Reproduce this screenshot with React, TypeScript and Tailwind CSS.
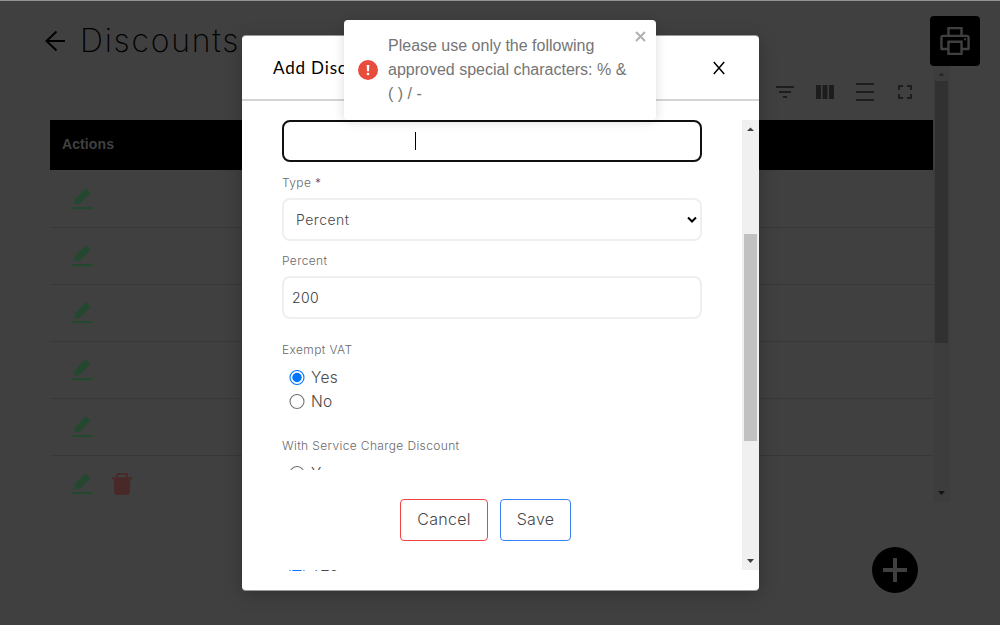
import React from "react";
import { AiOutlinePrinter } from "react-icons/ai";

const label =
  "font-['Inter'] font-light text-[12px] leading-4 tracking-[0.370px] text-[#6a6a6a] whitespace-nowrap";

function EditIcon() {
  return (
    <svg className="block h-6 w-6" viewBox="0 0 24 24" fill="#24482f">
      <path d="M4.3 17.2 4.8 12.2 15.8 1.1 20.7 6 9.3 17z" />
      <rect x="1" y="20" width="22" height="2.2" rx="1" />
    </svg>
  );
}

function TrashIcon() {
  return (
    <svg className="block h-6 w-6" viewBox="0 0 24 24" fill="#492828">
      <path d="M2 5.2h4V3.4Q6 1 8.300 1h7.400Q18 1 18 3.400v1.800h4v2h-1.700l-.6 13.300q-.2 2.300-2.400 2.300H6.700q-2.200 0-2.400-2.300L3.700 7.200H2zM7.800 5.200h8.400V3.500q0-.8-.8-.8H8.600q-.8 0-.8.8z" />
    </svg>
  );
}

function Radio({ checked = false, text }: { checked?: boolean; text: string }) {
  return (
    <div className="flex h-6 items-center pl-[7px]">
      <svg className="block h-4 w-4" viewBox="0 0 16 16" fill="none">
        <circle cx="8" cy="7.5" r="7" stroke={checked ? "#0075ff" : "#767676"} strokeWidth="1.1" />
        {checked && <circle cx="8" cy="7.5" r="4.7" fill="#0075ff" />}
      </svg>
      <span className="ml-[6px] font-['Inter'] text-[15.500px] font-light leading-6 tracking-[0.300px] text-[#484848]">
        {text}
      </span>
    </div>
  );
}

function Arrow({ down = false, className }: { down?: boolean; className: string }) {
  return (
    <svg className={className} viewBox="0 0 17 17">
      <path d={down ? "M5 6h7l-3.500 4z" : "M5 11h7L8.500 7.500z"} fill="currentColor" />
    </svg>
  );
}

function Toolbar() {
  const icons = [
    "M10 18h4v-2h-4v2zM3 6v2h18V6H3zm3 7h12v-2H6v2z",
    "M3 5h5v14H3zM9.500 5h5v14h-5zM16 5h5v14h-5z",
    "M3 3h18v2H3zM3 11h18v2H3zM3 19h18v2H3z",
    "M7 14H5v5h5v-2H7v-3zm-2-4h2V7h3V5H5v5zm12 7h-3v2h5v-5h-2v3zM14 5v2h3v3h2V5h-5z",
  ];
  return (
    <div className="flex h-[54px] justify-end pr-2 pt-[6px]">
      {icons.map((d) => (
        <div key={d} className="flex h-10 w-10 items-center justify-center">
          <svg className="h-6 w-6" viewBox="0 0 24 24" fill="#1d1d1d">
            <path d={d} />
          </svg>
        </div>
      ))}
    </div>
  );
}

function Page() {
  return (
    <div className="h-full border-t border-[#939595] bg-[#404040]">
      <header className="flex h-[65px] justify-between pl-[44px] pr-5">
        <div className="flex">
          <svg className="mt-[28px] h-6 w-6" viewBox="0 0 24 24" fill="none" stroke="#000" strokeWidth="2">
            <path d="M21 12H2M12.500 2.500 2.500 12l10 9.500" />
          </svg>
          <h1 className="ml-3 mt-5 font-['Inter'] text-[32px] font-extralight leading-10 tracking-[1.750px] text-black">
            Discounts
          </h1>
        </div>
        <div className="relative mt-[15px] flex h-[50px] w-[50px] items-center justify-center rounded bg-black">
          <AiOutlinePrinter size={36} color="#404040" />
        </div>
      </header>
      <div className="ml-[50px] flex h-[436px] w-[900px]">
        <div className="w-[883px] overflow-hidden">
          <Toolbar />
          <div className="mb-px flex h-[50px] items-center bg-black pl-3 pb-px font-['Liberation_Sans'] text-[14px] font-bold tracking-[0.100px] text-[#404040]">
            Actions
          </div>
          {[0, 1, 2, 3, 4, 5].map((i) => (
            <div
              key={i}
              className="flex h-[57px] items-center gap-4 border-b border-[#383838] pl-5 pb-px last:border-transparent"
            >
              <EditIcon />
              {i === 5 && <TrashIcon />}
            </div>
          ))}
        </div>
        <div className="flex w-[17px] flex-col bg-[#3d3d3d] text-[#141414]">
          <Arrow className="h-[15px] w-[17px] text-[#262626]" />
          <div className="mx-[2px] h-[262px] bg-[#313131]" />
          <Arrow down className="mt-auto h-[17px] w-[17px]" />
        </div>
      </div>
      <div className="ml-[872px] mt-[45px] flex h-[46px] w-[46px] items-center justify-center rounded-full bg-black">
        <svg className="h-6 w-6" viewBox="0 0 24 24" fill="#404040">
          <path d="M10 0h4v10h10v4H14v10h-4V14H0v-4h10z" />
        </svg>
      </div>
    </div>
  );
}

function Modal() {
  return (
    <div className="absolute left-[242px] top-9 flex h-[554px] w-[517px] flex-col rounded bg-white shadow-[0_1px_0_#999,0_-1px_0_#999,0_4px_18px_rgba(0,0,0,0.25)]">
      <div className="flex h-[65px] shrink-0 items-center justify-between border-b-2 border-[#d4d4d4] pl-[31px] pr-[33px]">
        <span className="font-['Lato'] text-[17px] tracking-[0.850px] text-black">Add Discount</span>
        <svg className="h-[14px] w-[14px]" viewBox="0 0 14 14" stroke="#000" strokeWidth="1.500">
          <path d="M1.800 1 12.200 13M12.200 1 1.800 13" />
        </svg>
      </div>
      <div className="mt-[19px] flex h-[450px]">
        <div className="flex w-[500px] flex-col pl-10">
          <div className="h-[350px] shrink-0 overflow-hidden">
            <div className="flex h-[42px] w-[420px] items-center rounded-lg border-2 border-[#101010] pl-[131px]">
              <div className="h-[18px] w-px bg-black" />
            </div>
            <div className={`${label} mt-[13px]`}>
              Type <span className="text-[#803030]">*</span>
            </div>
            <div className="mt-[7px] flex h-[43px] w-[420px] items-center justify-between rounded-lg border-2 border-[#eeeff0] pl-[12px] pr-[3px]">
              <span className="font-['Inter'] text-[14px] font-light tracking-[0.500px] text-[#484848]">Percent</span>
              <svg className="h-[7px] w-[10px]" viewBox="0 0 10 7" fill="none" stroke="#000" strokeWidth="2">
                <path d="m1 1.500 4 4 4-4" />
              </svg>
            </div>
            <div className={`${label} mt-3`}>Percent</div>
            <div className="mt-[7px] flex h-[43px] w-[420px] items-center rounded-lg border-2 border-[#eeeff0] pl-2 font-['Inter'] text-[14px] font-light tracking-[0.400px] text-[#383838]">
              200
            </div>
            <div className={`${label} mt-[23px]`}>Exempt VAT</div>
            <div className="mt-2">
              <Radio checked text="Yes" />
              <Radio text="No" />
            </div>
            <div className={`${label} mt-6`}>With Service Charge Discount</div>
            <div className="mt-2">
              <Radio text="Yes" />
            </div>
          </div>
          <div className="flex h-[100px] shrink-0 gap-3 pl-[118px] pt-[29px] font-['Inter'] text-[16px] font-light tracking-[0.300px] text-[#484848]">
            <div className="flex h-[42px] w-[88px] items-center justify-center rounded border border-[#ef4444] pb-0.5">
              Cancel
            </div>
            <div className="flex h-[42px] w-[71px] items-center justify-center rounded border border-[#3b82f6] pb-0.5">
              Save
            </div>
          </div>
          <div className="h-px shrink-0 overflow-hidden">
            <div className="-mt-3">
              <Radio checked text="Yes" />
            </div>
          </div>
        </div>
        <div className="flex w-[17px] flex-col bg-[#f0f0f0] text-[#404040]">
          <Arrow className="h-[17px] w-[17px]" />
          <div className="mx-[2px] mt-[97px] h-[207px] bg-[#c1c1c1]" />
          <Arrow down className="mt-auto h-[17px] w-[17px]" />
        </div>
      </div>
    </div>
  );
}

function Toast() {
  return (
    <div className="absolute left-[344px] top-5 flex h-[100px] w-[312px] rounded bg-white shadow-[0_1px_10px_rgba(0,0,0,0.1),0_2px_15px_rgba(0,0,0,0.05)]">
      <svg className="ml-[14px] mt-10 h-5 w-5 shrink-0" viewBox="0 0 20 20">
        <circle cx="10" cy="10" r="10" fill="#e74c3c" />
        <path d="M8.700 5h2.600l-.3 6.200H9z" fill="#fff" />
        <circle cx="10" cy="14" r="1.300" fill="#fff" />
      </svg>
      <p className="ml-[10px] mt-[14px] w-[244px] font-['Liberation_Sans'] text-[16px] leading-6 text-[#757575]">
        Please use only the following
        <br />
        approved special characters: % &amp;
        <br />( ) / -
      </p>
      <svg className="mt-[11px] h-[11px] w-[14px]" viewBox="0 0 14 11" stroke="#b0b0b0" strokeWidth="2">
        <path d="m4 1 9 9M13 1 4 10" />
      </svg>
    </div>
  );
}

export default function App() {
  return (
    <div className="relative h-[625px] w-[1000px] overflow-hidden">
      <Page />
      <Modal />
      <Toast />
    </div>
  );
}
